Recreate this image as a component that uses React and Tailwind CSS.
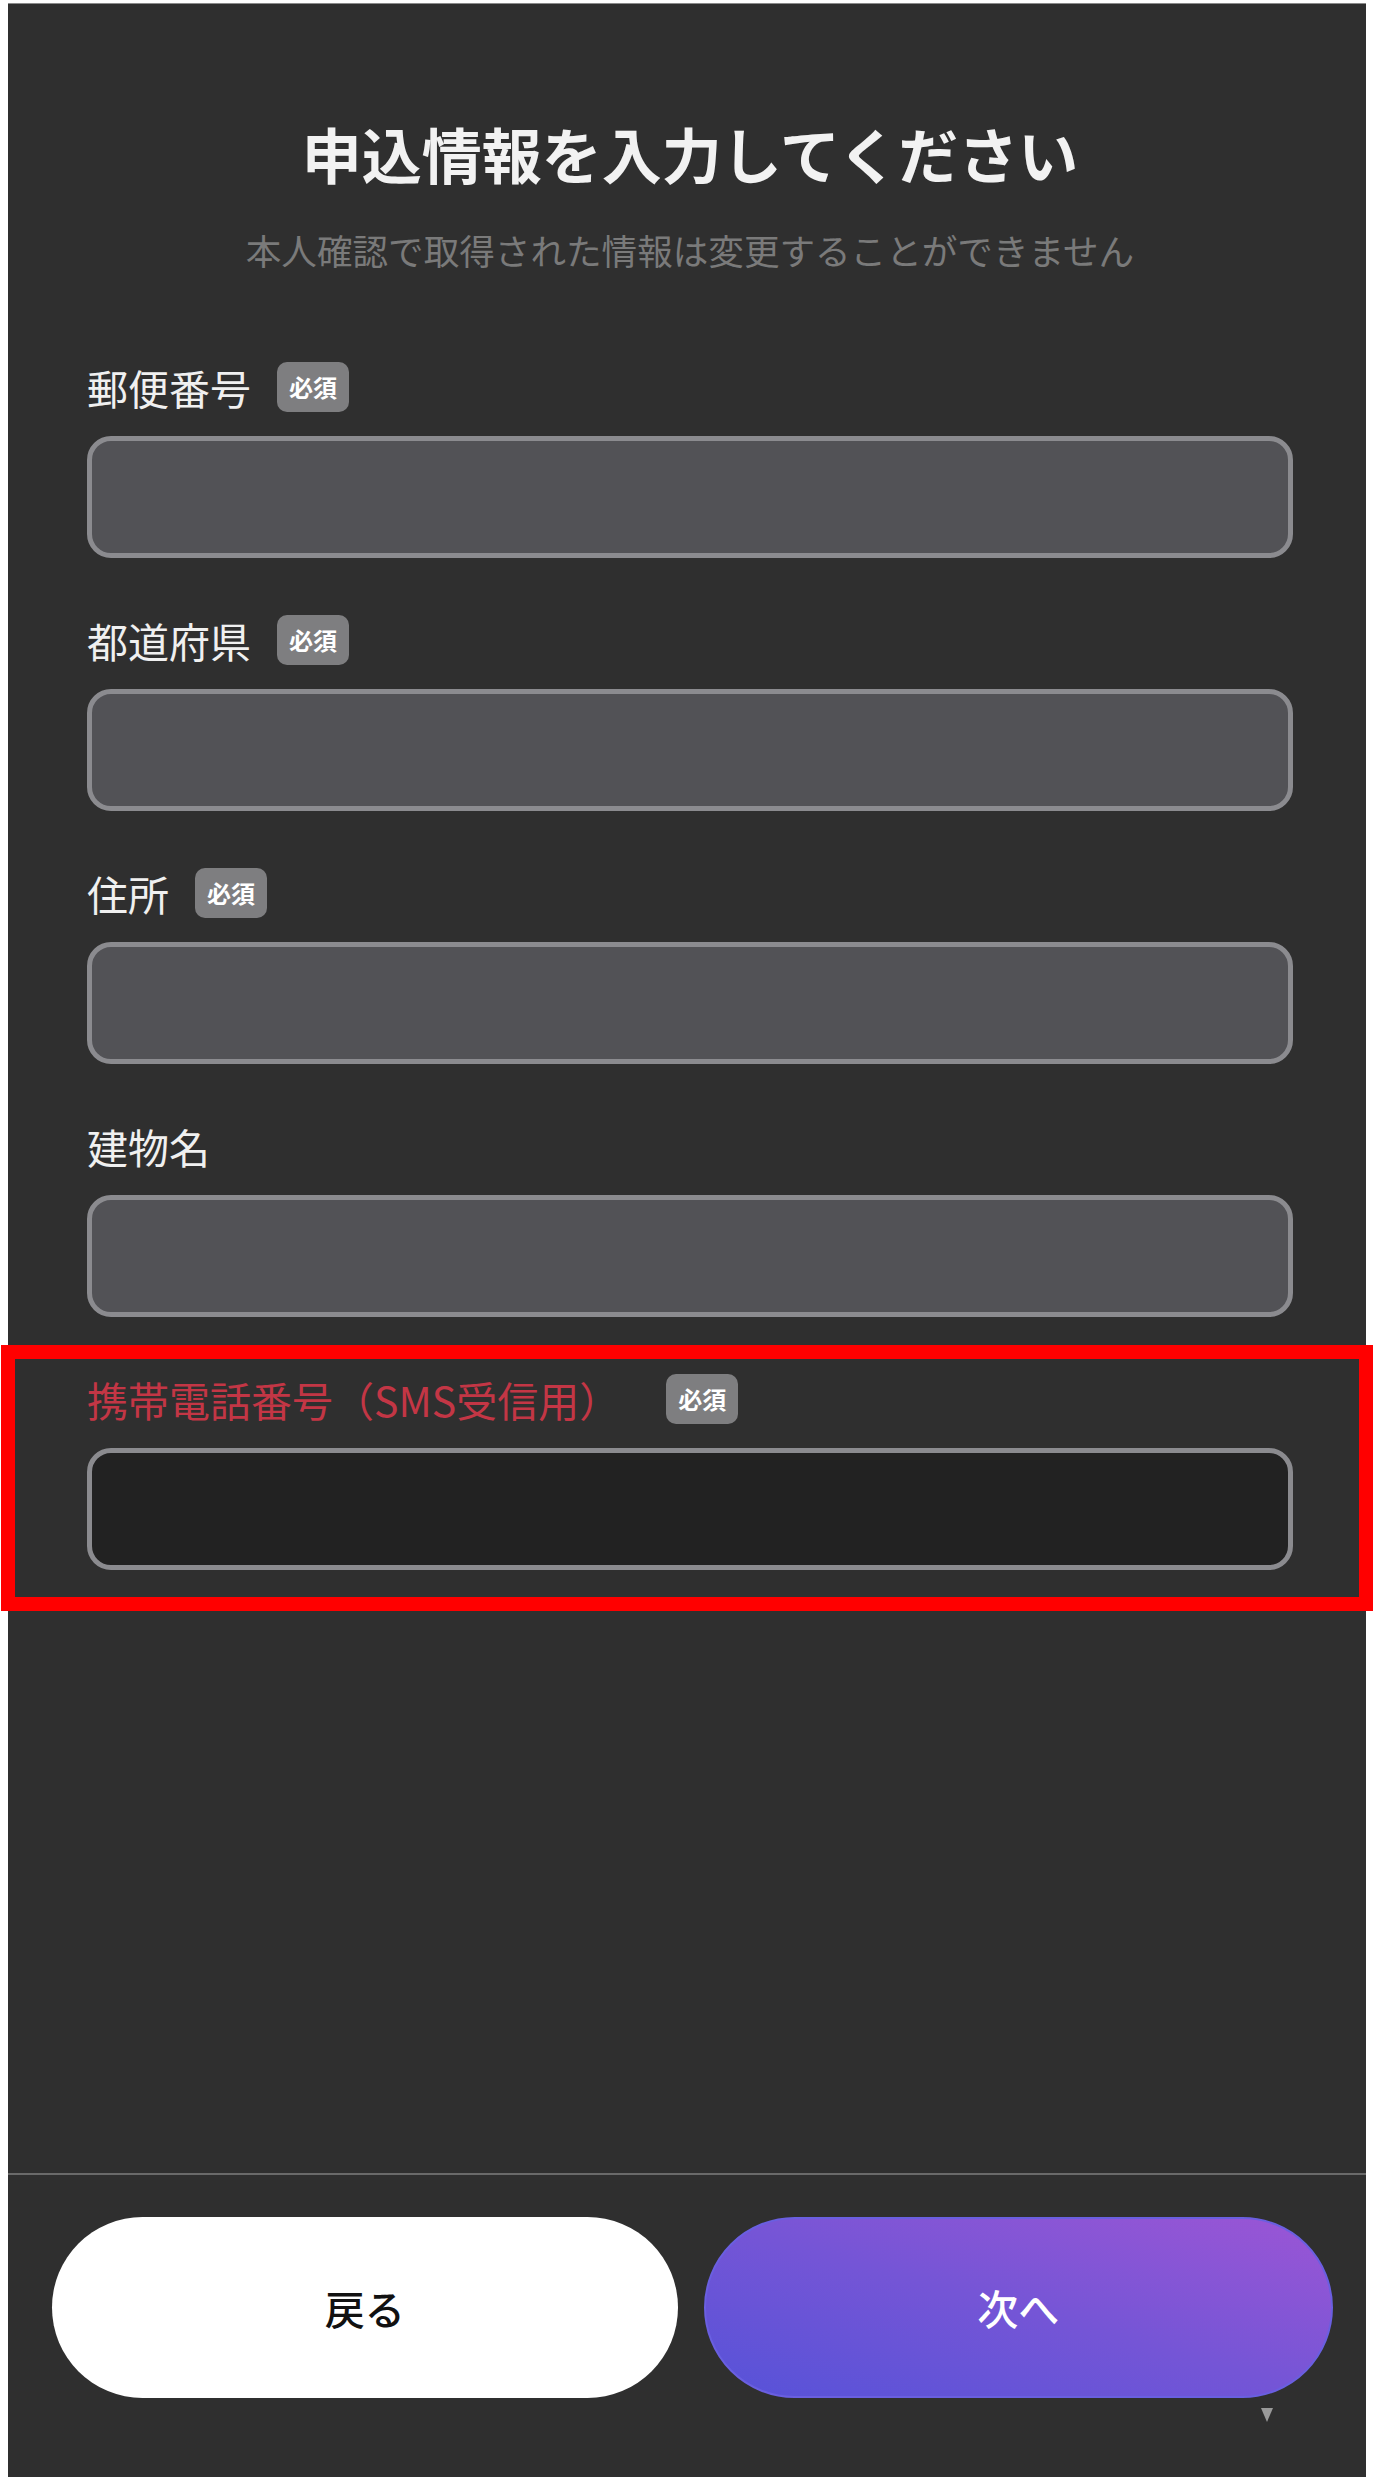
import React from "react";

const FONT = "font-['Noto_Sans_CJK_JP','Noto_Sans',sans-serif]";

function Badge() {
  return (
    <span className="flex h-[50px] w-[72px] items-center justify-center rounded-[10px] bg-[#7e7e80] text-[24px] font-bold leading-none text-white">
      必須
    </span>
  );
}

function Field({ label, required, danger, dark }) {
  return (
    <div className="flex flex-col">
      <div className={`flex h-[50px] items-center ${danger ? "gap-[46px]" : "gap-[26px]"}`}>
        <span
          className={`text-[41px] leading-none ${danger ? "text-[#c33645]" : "text-[#f0f0f0]"}`}
        >
          {label}
        </span>
        {required && <Badge />}
      </div>
      <input
        type="text"
        className={`mt-[24px] h-[122px] w-full rounded-[24px] border-[5px] border-[#8b8b8f] px-6 text-[36px] text-white outline-none ${
          dark ? "bg-[#222222]" : "bg-[#525256]"
        }`}
      />
    </div>
  );
}

export default function App() {
  return (
    <div className={`relative h-[2479px] w-[1375px] bg-white pt-[3px] ${FONT}`}>
      <div className="ml-[8px] flex h-[2474px] w-[1358px] flex-col border-t border-[#8a8a8a] bg-[#2f2f2f]">
        {/* heading */}
        <div className="flex flex-col items-center pl-[6px] pt-[113px]">
          <h1 className="text-[60px] font-bold leading-[72px] text-[#f2f2f2]">
            申込情報を入力してください
          </h1>
          <p className="mt-[37px] text-[35.6px] leading-[48px] text-[#7a7a7a]">
            本人確認で取得された情報は変更することができません
          </p>
        </div>

        {/* form fields */}
        <div className="mt-[88px] flex flex-col gap-[57px] pl-[79px] pr-[73px]">
          <Field label="郵便番号" required />
          <Field label="都道府県" required />
          <Field label="住所" required />
          <Field label="建物名" />
          <Field label="携帯電話番号（SMS受信用）" required danger dark />
        </div>

        <div className="flex-1" />

        {/* footer actions */}
        <div className="h-[2px] w-full bg-[#6a6a6a]" />
        <div className="flex gap-[26px] pl-[44px] pr-[33px] pt-[42px]">
          <button className="flex h-[181px] flex-1 items-center justify-center rounded-full bg-white text-[40px] font-medium text-[#111111]">
            戻る
          </button>
          <button className="flex h-[181px] flex-1 items-center justify-center rounded-full border-2 border-[#6a5fe0] bg-linear-to-tr from-[#5652d8] via-[#7555d6] to-[#9b55d5] text-[41px] font-medium text-white">
            次へ
          </button>
        </div>
        <div className="flex justify-end pr-[93px] pt-[10px]">
          <svg width="12" height="14" viewBox="0 0 12 14">
            <polygon points="0,0 12,0 6,14" fill="#9a9a9a" />
          </svg>
        </div>
        <div className="flex-[0_0_55px]" />
      </div>

      {/* highlight frame around the phone field */}
      <div className="pointer-events-none absolute left-[1px] top-[1345px] h-[266px] w-[1372px] border-[14px] border-[#ff0000]" />
    </div>
  );
}
